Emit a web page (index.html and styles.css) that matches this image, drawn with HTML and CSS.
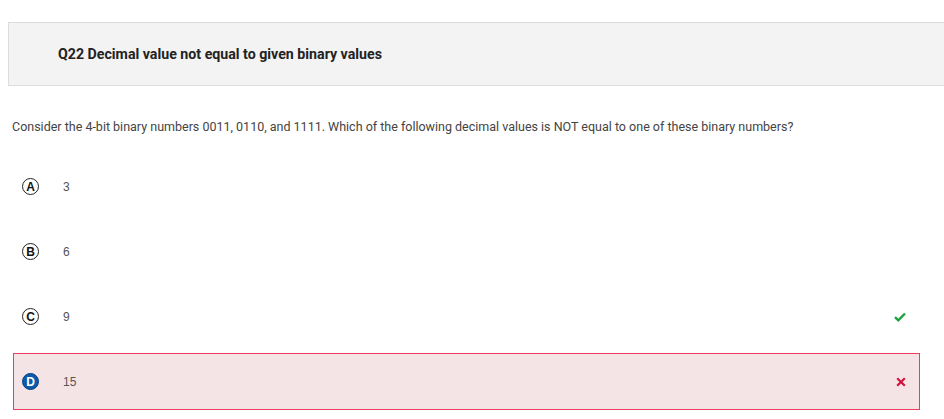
FILE: index.html
```html
<!DOCTYPE html>
<html>
<head>
<meta charset="utf-8">
<link rel="stylesheet" href="styles.css">
</head>
<body>
<div class="header"><h1 class="title">Q22 Decimal value not equal to given binary values</h1></div>
<p class="question">Consider the 4-bit binary numbers 0011, 0110, and 1111. Which of the following decimal values is NOT equal to one of these binary numbers?</p>
<div class="options">
  <div class="option">
    <span class="badge">A</span><span class="value">3</span>
  </div>
  <div class="option">
    <span class="badge">B</span><span class="value">6</span>
  </div>
  <div class="option">
    <span class="badge">C</span><span class="value">9</span>
    <svg class="mark" width="12" height="10" viewBox="0 0 12 10"><path d="M1 5.2 L4.3 8.3 L11 1.5" fill="none" stroke="#1aa43a" stroke-width="2.4"/></svg>
  </div>
  <div class="option wrong">
    <span class="badge selected">D</span><span class="value">15</span>
    <svg class="mark" width="10" height="10" viewBox="0 0 10 10"><path d="M1.2 1.2 L8.8 8.8 M8.8 1.2 L1.2 8.8" fill="none" stroke="#d6123f" stroke-width="2.2"/></svg>
  </div>
</div>
</body>
</html>
```
FILE: styles.css
```css
html, body {
  margin: 0;
  padding: 0;
  background: #ffffff;
  overflow: hidden;
}
body {
  padding: 22px 0 0 8px;
  font-family: Roboto, "Liberation Sans", sans-serif;
}
.header {
  margin-right: -20px;
  height: 62px;
  background: #f3f3f3;
  border: 1px solid #dcdcdc;
  display: flex;
  align-items: center;
  padding-left: 49px;
}
.title {
  margin: 0;
  font-size: 14.2px;
  font-weight: 700;
  color: #222222;
}
.question {
  margin: 33px 0 0 4px;
  font-size: 12.5px;
  line-height: 16px;
  color: #444444;
}
.options {
  margin: 23px 24px 0 5px;
  display: flex;
  flex-direction: column;
  gap: 8px;
}
.option {
  height: 57px;
  display: flex;
  align-items: center;
  padding: 0 14px 0 9px;
}
.option.wrong {
  background: #f5e4e6;
  box-shadow: inset 0 0 0 1px #ee3d5d;
}
.badge {
  width: 15px;
  height: 15px;
  border: 1.5px solid #222;
  border-radius: 50%;
  display: flex;
  align-items: center;
  justify-content: center;
  font-family: "Liberation Sans", Arial, sans-serif;
  font-weight: 700;
  font-size: 12px;
  color: #111;
  flex: none;
}
.badge.selected {
  background: #0b5cad;
  border-color: #0a3f7a;
  color: #ffffff;
}
.value {
  margin-left: 24px;
  font-family: "Liberation Sans", Arial, sans-serif;
  font-size: 12px;
  color: #555555;
  flex: 1;
}
.mark {
  flex: none;
}
```
